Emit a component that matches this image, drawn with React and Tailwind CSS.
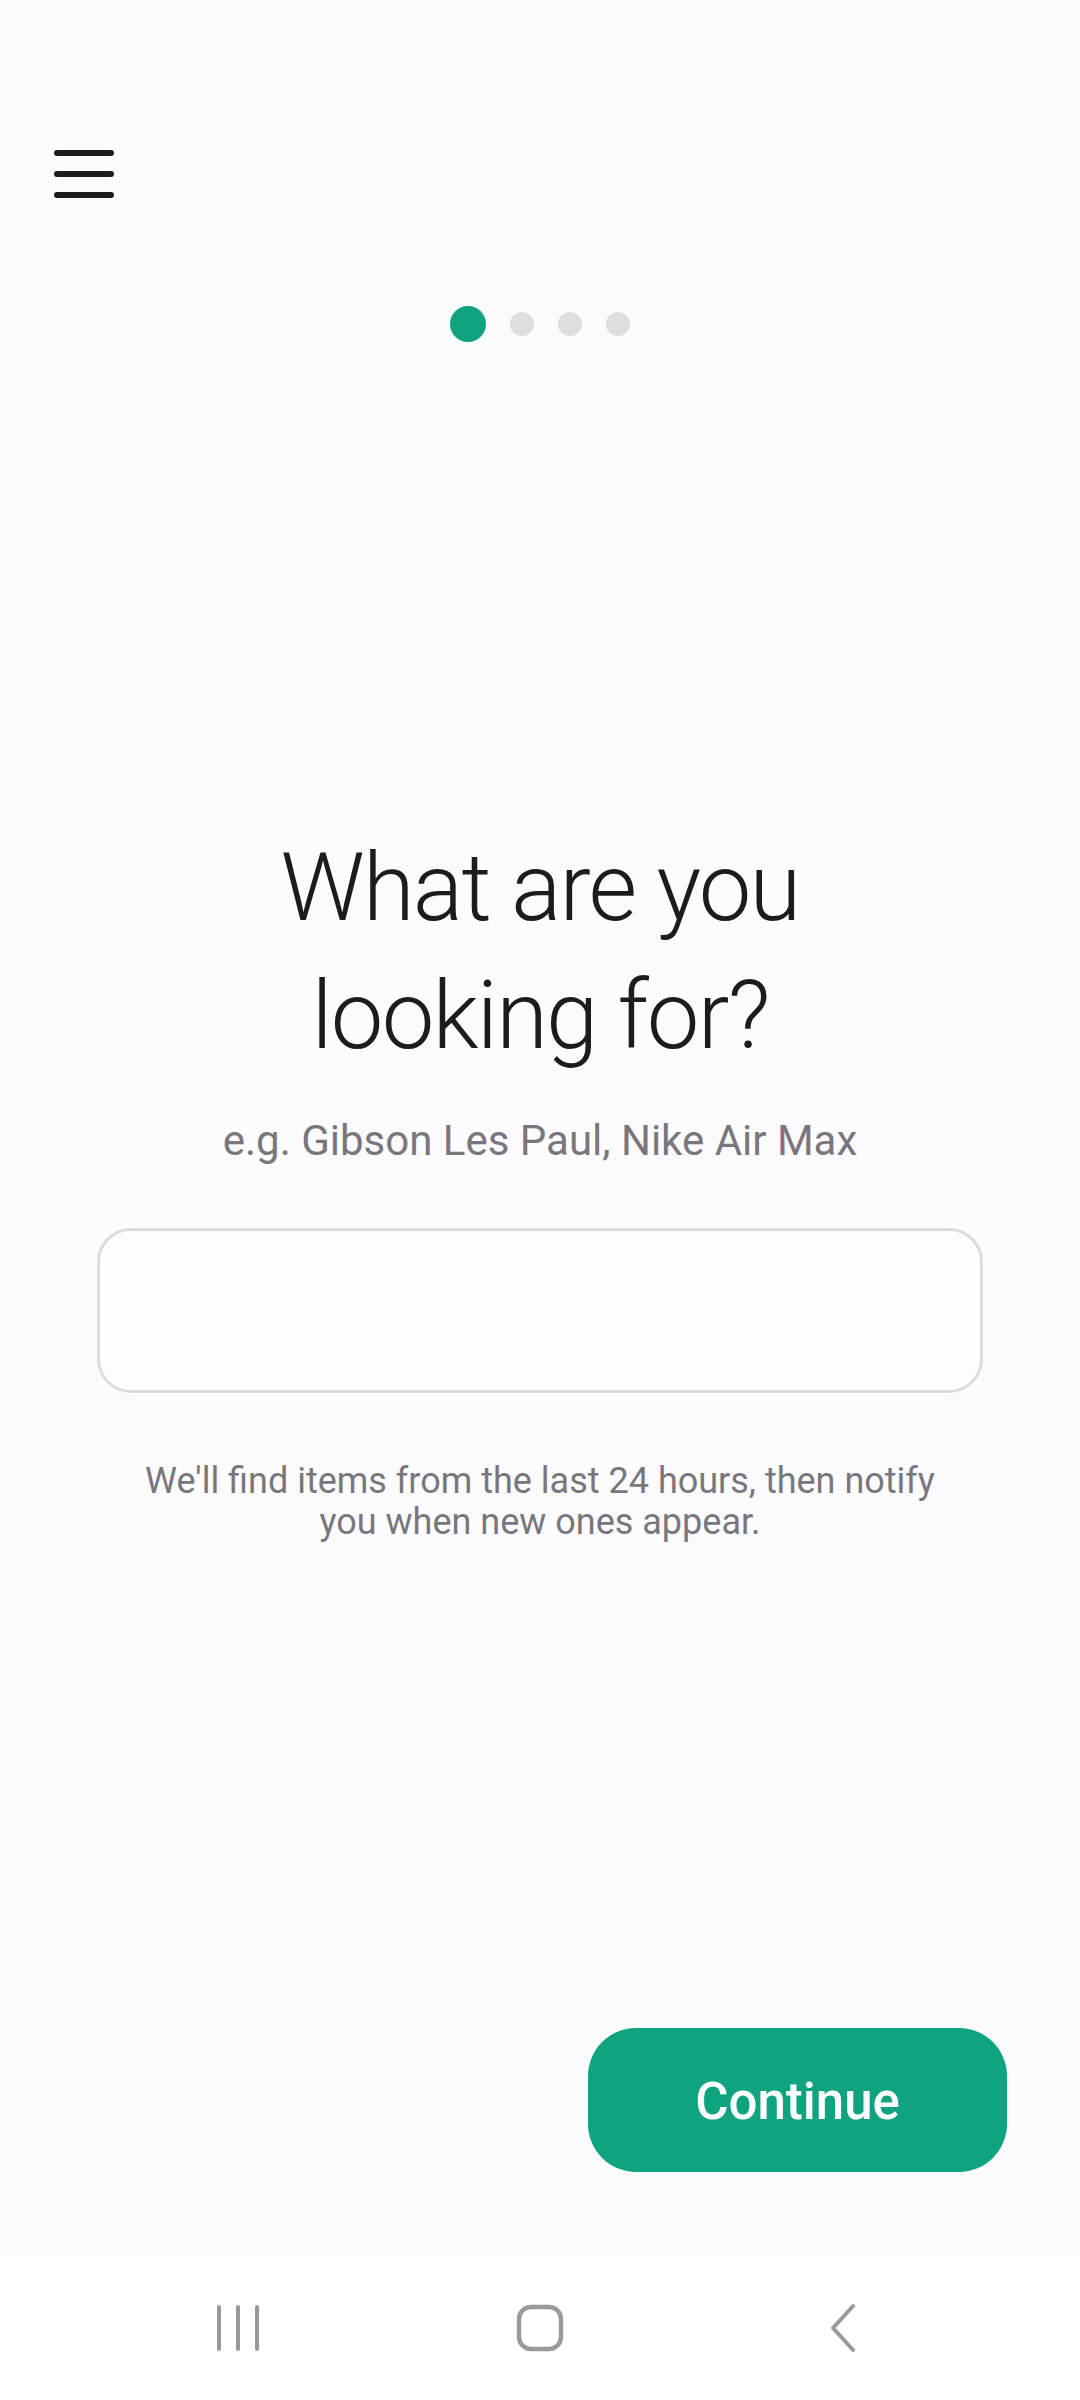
import React from "react";

export default function App() {
  return (
    <div className="w-[1080px] h-[2400px] flex flex-col bg-[#fcfbfe]" style={{ fontFamily: "Roboto, 'Noto Sans', sans-serif" }}>
      <div className="h-[2255px] flex flex-col">
        {/* header */}
        <div className="pt-[150px] pl-[54px]">
          <svg width="60" height="48" viewBox="0 0 60 48">
            <g stroke="#1c1b1f" strokeWidth="6" strokeLinecap="round">
              <line x1="3" y1="3" x2="57" y2="3" />
              <line x1="3" y1="24" x2="57" y2="24" />
              <line x1="3" y1="45" x2="57" y2="45" />
            </g>
          </svg>
        </div>
        {/* dots */}
        <div className="mt-[108px] flex items-center justify-center gap-[24px] h-[36px]">
          <div className="w-[36px] h-[36px] rounded-full bg-[#10a37f]" />
          <div className="w-[24px] h-[24px] rounded-full bg-[#dedede]" />
          <div className="w-[24px] h-[24px] rounded-full bg-[#dedede]" />
          <div className="w-[24px] h-[24px] rounded-full bg-[#dedede]" />
        </div>
        {/* title */}
        <h1 className="mt-[482px] text-center text-[94px] leading-[128px] font-light tracking-[-1.8px] text-[#1c1b1f]">
          What are you
          <br />
          looking for?
        </h1>
        <p className="mt-[33px] text-center text-[42px] leading-[56px] text-[#79777d]">
          e.g. Gibson Les Paul, Nike Air Max
        </p>
        <div className="mt-[59px] mx-auto w-[886px] h-[165px] rounded-[34px] border-[3px] border-[#dcdbe0] bg-[#fdfcff]" />
        <p className="mt-[68px] text-center text-[36px] leading-[41px] text-[#79777d]">
          We'll find items from the last 24 hours, then notify
          <br />
          you when new ones appear.
        </p>
        <div className="flex-1" />
        <div className="flex justify-end pr-[73px] pb-[83px]">
          <button className="w-[419px] h-[144px] pt-[4px] rounded-[48px] bg-[#10a37f] text-white text-[51px] font-medium">
            Continue
          </button>
        </div>
      </div>
      {/* nav bar */}
      <div className="h-[145px] bg-white flex items-center">
        <svg className="ml-[216px]" width="44" height="48" viewBox="0 0 44 48">
          <g stroke="#9a9a9a" strokeWidth="4" strokeLinecap="round">
            <line x1="3" y1="3" x2="3" y2="45" />
            <line x1="22" y1="3" x2="22" y2="45" />
            <line x1="41" y1="3" x2="41" y2="45" />
          </g>
        </svg>
        <svg className="ml-[256px]" width="48" height="48" viewBox="0 0 48 48">
          <rect x="3" y="3" width="42" height="42" rx="12" fill="none" stroke="#9a9a9a" strokeWidth="4.5" />
        </svg>
        <svg className="ml-[263px]" width="30" height="50" viewBox="0 0 30 50">
          <polyline points="26,3 6,25 26,47" fill="none" stroke="#9a9a9a" strokeWidth="4" strokeLinecap="round" strokeLinejoin="round" />
        </svg>
      </div>
    </div>
  );
}
